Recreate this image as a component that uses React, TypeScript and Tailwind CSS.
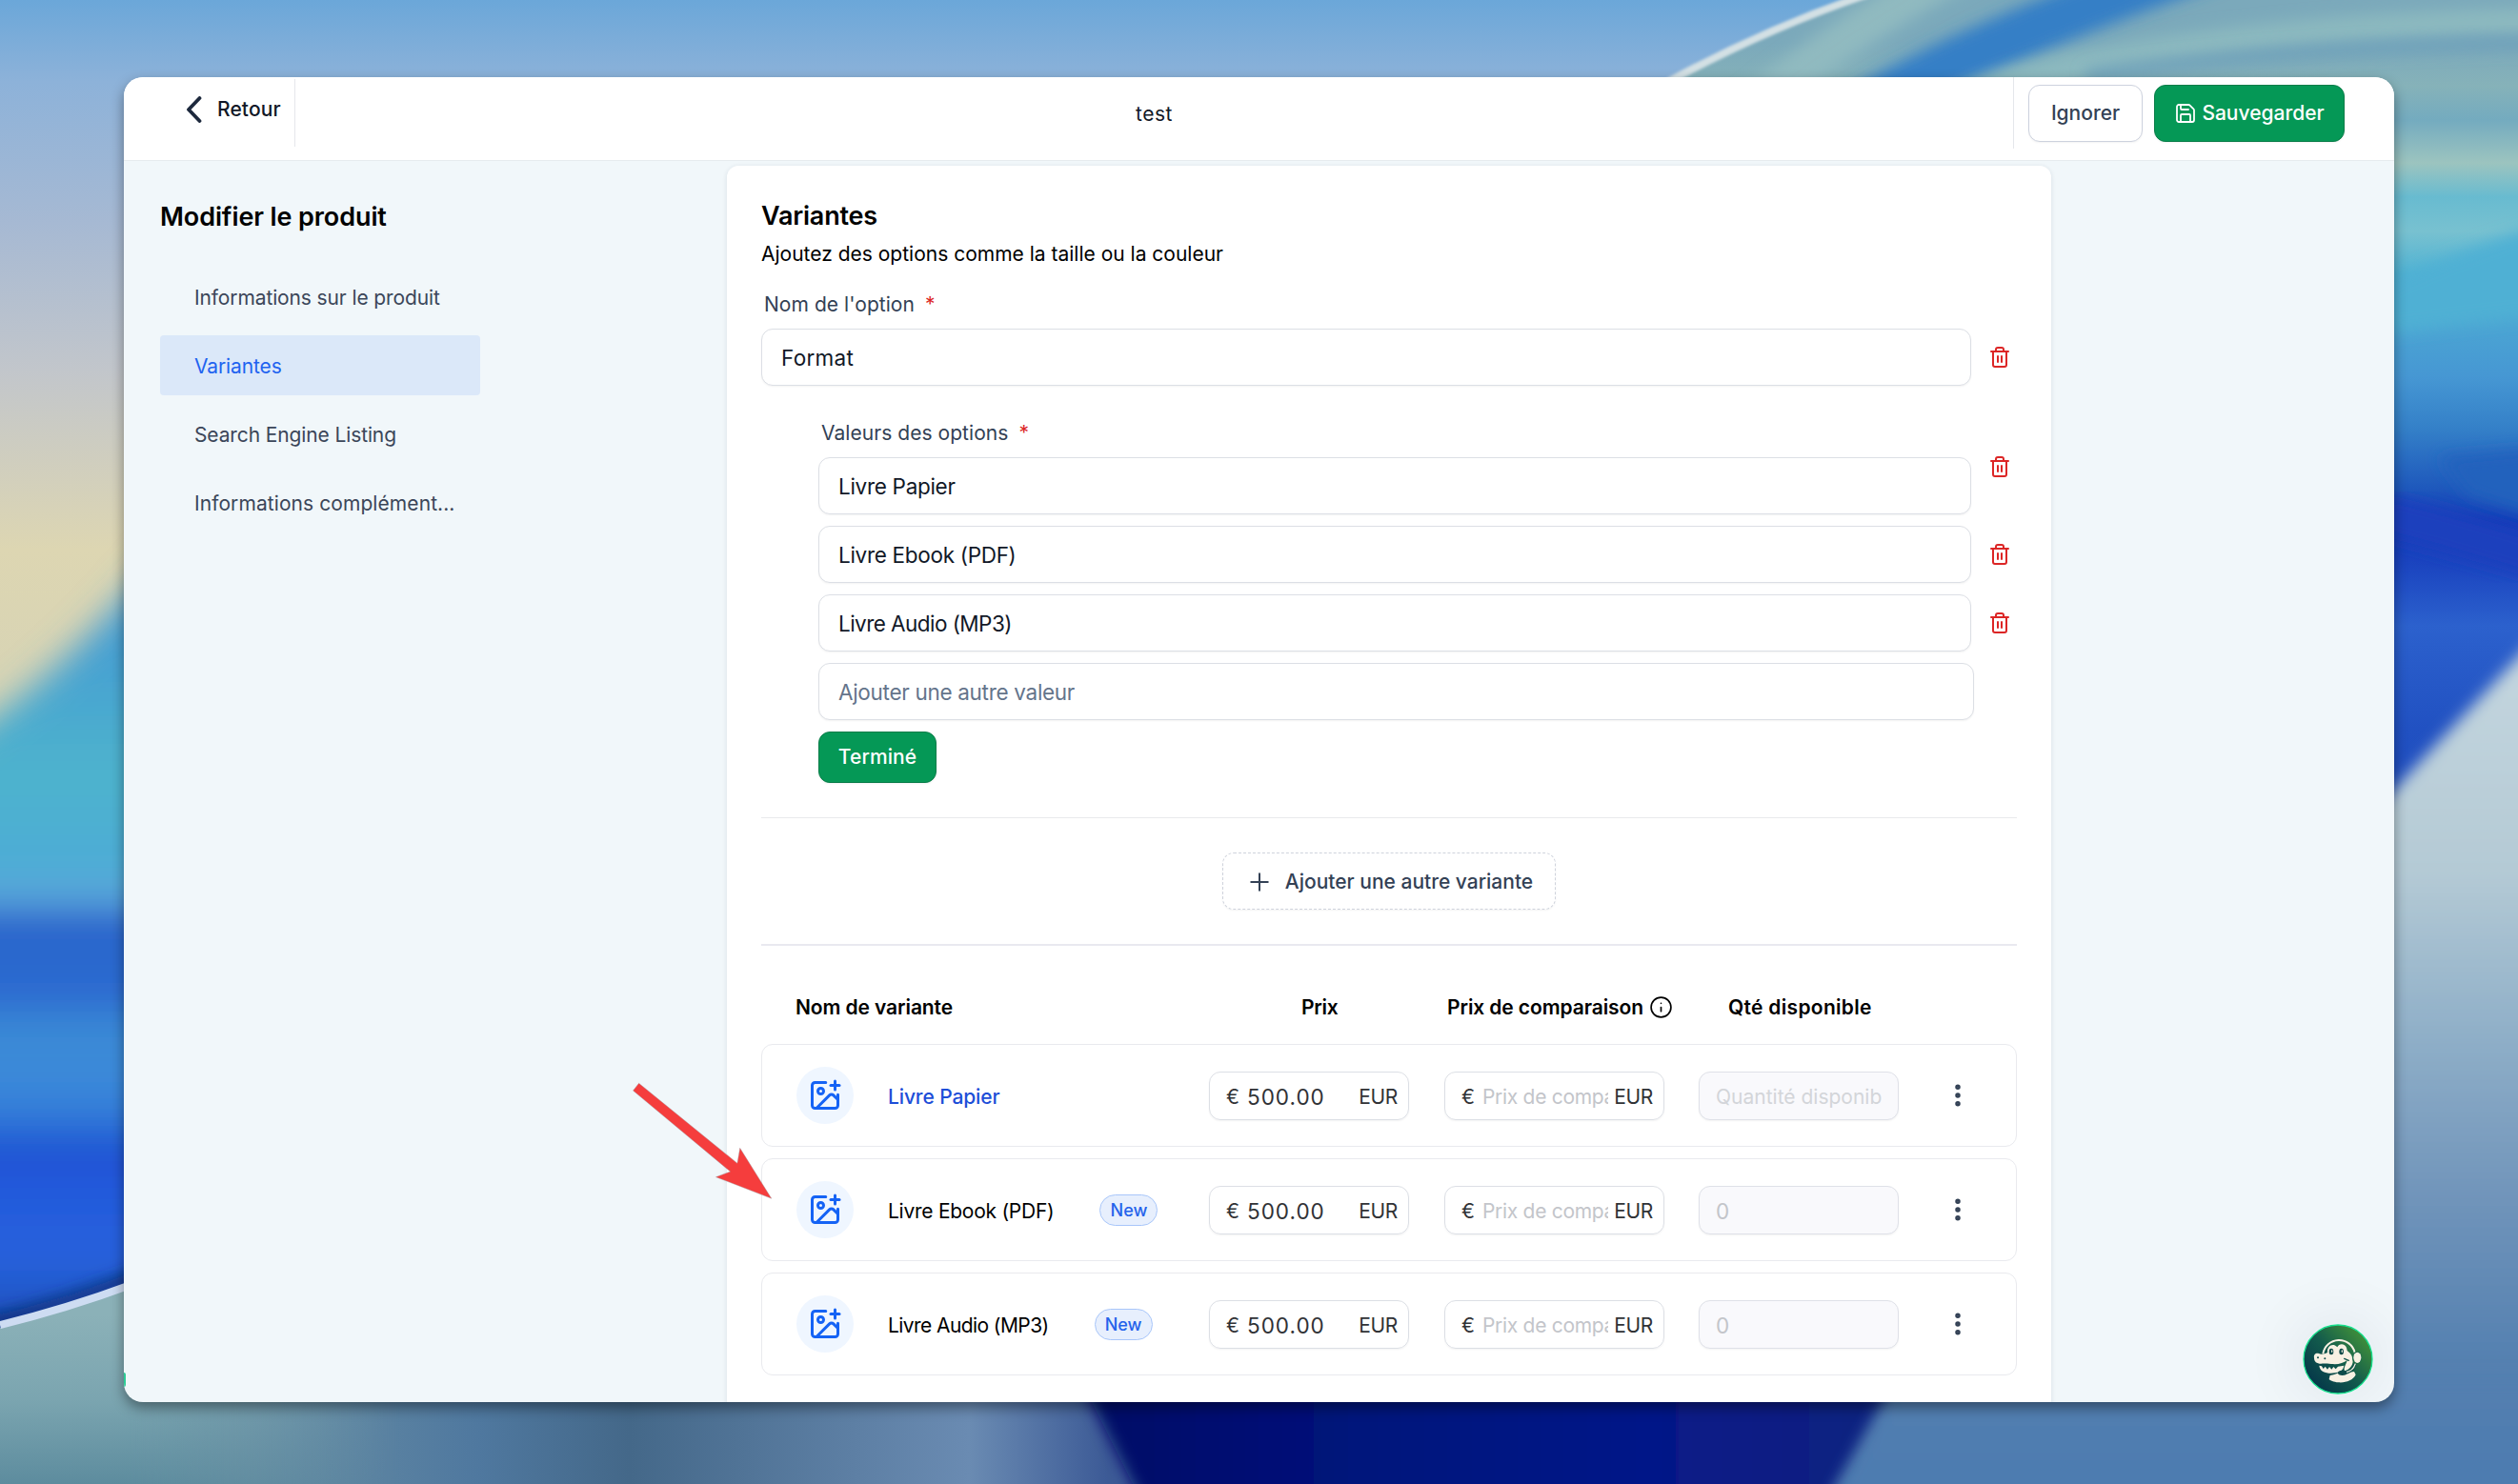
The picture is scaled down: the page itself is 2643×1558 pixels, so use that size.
import { ReactNode } from "react";
import clsx from "clsx";
import { EllipsisVertical, ImagePlus, Info, Plus, Save, Trash2 } from "lucide-react";

interface Variant {
  name: string;
  price: string;
  isNew: boolean;
  isLink: boolean;
  qtyPlaceholder: string;
}

const menu = [
  { label: "Informations sur le produit", active: false },
  { label: "Variantes", active: true },
  { label: "Search Engine Listing", active: false },
  { label: "Informations complément...", active: false },
];

const optionValues = ["Livre Papier", "Livre Ebook (PDF)", "Livre Audio (MP3)"];

const variants: Variant[] = [
  { name: "Livre Papier", price: "500.00", isNew: false, isLink: true, qtyPlaceholder: "Quantité disponible" },
  { name: "Livre Ebook (PDF)", price: "500.00", isNew: true, isLink: false, qtyPlaceholder: "0" },
  { name: "Livre Audio (MP3)", price: "500.00", isNew: true, isLink: false, qtyPlaceholder: "0" },
];

function Wallpaper() {
  return (
    <svg className="absolute inset-0 h-full w-full" viewBox="0 0 2643 1558" preserveAspectRatio="none">
      <defs>
        <linearGradient id="sky" x1="0" y1="0" x2="0" y2="1">
          <stop offset="0" stopColor="#6ba7d9" />
          <stop offset="0.055" stopColor="#8db2d9" />
          <stop offset="0.15" stopColor="#a6b9d3" />
          <stop offset="0.25" stopColor="#c2c6cb" />
          <stop offset="0.37" stopColor="#ddd6b2" />
          <stop offset="0.45" stopColor="#d8d4b4" />
          <stop offset="1" stopColor="#d8d4b4" />
        </linearGradient>
        <linearGradient id="leftWave" gradientUnits="userSpaceOnUse" x1="0" y1="560" x2="0" y2="1400">
          <stop offset="0" stopColor="#3c93d8" />
          <stop offset="0.14" stopColor="#459fd2" />
          <stop offset="0.3" stopColor="#4fb3cd" />
          <stop offset="0.42" stopColor="#4dacd6" />
          <stop offset="0.46" stopColor="#5fa6dc" />
          <stop offset="0.485" stopColor="#2059c9" />
          <stop offset="0.52" stopColor="#2e6bcd" />
          <stop offset="0.57" stopColor="#2a66d0" />
          <stop offset="0.62" stopColor="#3b8bd5" />
          <stop offset="0.69" stopColor="#3b89da" />
          <stop offset="0.74" stopColor="#2f75d8" />
          <stop offset="0.765" stopColor="#1d51d2" />
          <stop offset="0.82" stopColor="#245adc" />
          <stop offset="0.91" stopColor="#2662dc" />
          <stop offset="1" stopColor="#1c4cb4" />
        </linearGradient>
        <linearGradient id="floor" gradientUnits="userSpaceOnUse" x1="0" y1="0" x2="2643" y2="0">
          <stop offset="0" stopColor="#6a98a6" />
          <stop offset="0.1" stopColor="#688ea4" />
          <stop offset="0.19" stopColor="#4f789f" />
          <stop offset="0.25" stopColor="#446889" />
          <stop offset="0.385" stopColor="#6a8bb2" />
          <stop offset="0.44" stopColor="#3c5a96" />
          <stop offset="0.8" stopColor="#4c7bb0" />
          <stop offset="1" stopColor="#5c86b4" />
        </linearGradient>
        <linearGradient id="sage" gradientUnits="userSpaceOnUse" x1="0" y1="1380" x2="0" y2="1558">
          <stop offset="0" stopColor="#8bb1b8" />
          <stop offset="0.5" stopColor="#7ba5b0" />
          <stop offset="1" stopColor="#5d8c9e" />
        </linearGradient>
        <linearGradient id="sageFade" gradientUnits="userSpaceOnUse" x1="130" y1="0" x2="420" y2="0">
          <stop offset="0" stopColor="#fff" />
          <stop offset="1" stopColor="#000" />
        </linearGradient>
        <mask id="sageMask">
          <rect width="600" height="1558" fill="url(#sageFade)" />
        </mask>
        <linearGradient id="navy" gradientUnits="userSpaceOnUse" x1="1140" y1="0" x2="1980" y2="0">
          <stop offset="0" stopColor="#010f66" />
          <stop offset="0.35" stopColor="#04127c" />
          <stop offset="0.7" stopColor="#061888" />
          <stop offset="1" stopColor="#0a2380" />
        </linearGradient>
        <linearGradient id="rightWave" gradientUnits="userSpaceOnUse" x1="2513" y1="0" x2="2513" y2="900">
          <stop offset="0" stopColor="#7ba9bb" />
          <stop offset="0.05" stopColor="#7ba9bb" />
          <stop offset="0.1" stopColor="#86b2b9" />
          <stop offset="0.14" stopColor="#74abbf" />
          <stop offset="0.19" stopColor="#9cc4bf" />
          <stop offset="0.23" stopColor="#68bbd0" />
          <stop offset="0.27" stopColor="#78c1d0" />
          <stop offset="0.32" stopColor="#50b2d3" />
          <stop offset="0.44" stopColor="#4697d3" />
          <stop offset="0.5" stopColor="#3480c8" />
          <stop offset="0.57" stopColor="#1e58bc" />
          <stop offset="0.61" stopColor="#133ab8" />
          <stop offset="0.66" stopColor="#1b45c0" />
          <stop offset="0.73" stopColor="#2c61cd" />
          <stop offset="0.85" stopColor="#2151c2" />
          <stop offset="1" stopColor="#1c48bc" />
        </linearGradient>
        <linearGradient id="mist" gradientUnits="userSpaceOnUse" x1="0" y1="700" x2="0" y2="1558">
          <stop offset="0" stopColor="#c3d5de" />
          <stop offset="0.25" stopColor="#b4cad5" />
          <stop offset="0.45" stopColor="#8fafc8" />
          <stop offset="0.65" stopColor="#7094ba" />
          <stop offset="0.85" stopColor="#5480b0" />
          <stop offset="1" stopColor="#4d7bb0" />
        </linearGradient>
        <filter id="soft20" x="-30%" y="-30%" width="160%" height="160%">
          <feGaussianBlur stdDeviation="18" />
        </filter>
        <filter id="soft8" x="-20%" y="-50%" width="140%" height="200%">
          <feGaussianBlur stdDeviation="8" />
        </filter>
        <filter id="soft2" x="-20%" y="-20%" width="140%" height="140%">
          <feGaussianBlur stdDeviation="1.5" />
        </filter>
      </defs>
      <rect width="2643" height="1558" fill="url(#sky)" />

      {/* left side */}
      <path d="M-80 800 Q50 730 180 570 L400 500 L400 1440 L-80 1440Z" fill="url(#leftWave)" filter="url(#soft20)" />
      <path d="M-20 1384 Q80 1360 160 1326 L160 1342 Q80 1370 -20 1400Z" fill="#0a2d74" filter="url(#soft8)" />
      <rect y="1462" width="2643" height="96" fill="url(#floor)" />
      <path d="M0 1394 Q70 1378 300 1290 L600 1290 L600 1558 L0 1558Z" fill="url(#sage)" mask="url(#sageMask)" />
      <path d="M0 1391 Q70 1374 140 1348" fill="none" stroke="#cddcf2" strokeWidth="8" />

      {/* bottom */}
      <path d="M1130 1440 L2010 1440 L1915 1590 L1205 1590Z" fill="url(#navy)" filter="url(#soft8)" />

      {/* right side */}
      <path d="M1754 84 Q1854 30 1956 -4 L2660 -4 L2660 900 L2300 900 L2300 84Z" fill="url(#rightWave)" />
      <path d="M2500 300 Q2580 262 2670 236 L2670 330 L2500 350Z" fill="#4fb0d4" filter="url(#soft8)" />
      <path d="M2500 540 Q2580 560 2670 588" fill="none" stroke="#1a40bd" strokeWidth="44" filter="url(#soft8)" />
      <path d="M2560 480 L2670 470 L2670 545 L2590 520Z" fill="#2462bd" filter="url(#soft8)" />
      <path d="M1820 130 Q1930 30 2130 -70" fill="none" stroke="#90bac0" strokeWidth="40" filter="url(#soft8)" />
      <path d="M1930 130 Q2060 50 2330 -44" fill="none" stroke="#367fc6" strokeWidth="52" filter="url(#soft8)" />
      <path d="M2040 112 Q2240 30 2680 22" fill="none" stroke="#8cb9bf" strokeWidth="28" filter="url(#soft8)" />
      <path d="M2190 80 Q2400 48 2680 44" fill="none" stroke="#6c9fba" strokeWidth="12" filter="url(#soft8)" />
      <path d="M1751 86 Q1854 30 1960 -6" fill="none" stroke="#d3e0e4" strokeWidth="8" filter="url(#soft2)" />
      <path d="M2480 864 L2660 672 L2700 1600 L2480 1600Z" fill="url(#mist)" filter="url(#soft8)" />
      <path d="M1990 1446 L2700 1446 L2700 1640 L1885 1640Z" fill="url(#mist)" filter="url(#soft8)" />
    </svg>
  );
}

function Mascot() {
  return (
    <svg className="h-[74px] w-[74px]" viewBox="110 88 222 222">
      <defs>
        <linearGradient id="mascotBg" x1="0.15" y1="0.85" x2="0.85" y2="0.2">
          <stop offset="0" stopColor="#06394a" />
          <stop offset="0.5" stopColor="#125a4c" />
          <stop offset="1" stopColor="#3b8a3c" />
        </linearGradient>
      </defs>
      <circle cx="221" cy="199" r="108" fill="url(#mascotBg)" stroke="#16e08d" strokeWidth="4" />
      <path d="M174 182 A51 51 0 0 1 274 178" fill="none" stroke="#f8f1e3" strokeWidth="6" />
      {/* head and upper snout */}
      <path
        d="M146 195 C144 183 152 178 161 181 C170 185 178 182 188 178 C186 162 197 152 208 154 C214 155 217 160 219 161 C223 152 233 149 241 154 C248 159 249 165 250 172 C262 180 268 192 268 204 C268 220 256 232 242 236 C238 224 248 214 250 202 C238 212 222 216 200 214 C186 213 178 212 168 213 C154 213 146 206 146 195Z"
        fill="#f8f1e3"
      />
      {/* lower jaw with teeth */}
      <path
        d="M162 219 L170 221 L175 229 L181 222 L188 231 L194 223 L201 231 L207 223 L214 230 L221 222 L240 219 C238 232 228 240 212 242 C190 245 164 242 162 219Z"
        fill="#f8f1e3"
      />
      {/* neck */}
      <path d="M196 250 C212 248 222 242 230 238 L256 240 L272 238 L277 248 C268 266 246 274 222 272 C208 271 196 266 193 262Z" fill="#f8f1e3" />
      <path d="M241 197 L255 203" fill="none" stroke="#11564c" strokeWidth="4" strokeLinecap="round" />
      <ellipse cx="200" cy="175" rx="7" ry="10" fill="#0f4c4a" />
      <ellipse cx="232" cy="175" rx="7" ry="10" fill="#0f4c4a" />
      <ellipse cx="202" cy="174" rx="2" ry="4" fill="#f8f1e3" />
      <ellipse cx="234" cy="174" rx="2" ry="4" fill="#f8f1e3" />
      <circle cx="158" cy="194" r="3" fill="#0f4c4a" />
      <circle cx="180" cy="197" r="3" fill="#0f4c4a" />
      <ellipse cx="281" cy="194" rx="15" ry="20" fill="#1c6a48" />
      <ellipse cx="282" cy="194" rx="12" ry="17" fill="#f8f1e3" />
      <path d="M274 214 C270 230 256 240 242 242" fill="none" stroke="#11564c" strokeWidth="11" />
      <path d="M276 213 C271 229 257 239 244 241" fill="none" stroke="#f8f1e3" strokeWidth="4" />
      <ellipse cx="235" cy="242" rx="14" ry="8" fill="#0f4c4a" />
    </svg>
  );
}

function Label({ children }: { children: ReactNode }) {
  return (
    <label className="mb-[11px] flex h-[30px] items-center gap-[11px] pt-0.5 pl-[3px] text-[21px] tracking-[0.05px] text-[#334155]">
      {children}
      <span className="text-[#dc2626]">*</span>
    </label>
  );
}

function TextInput({ value, placeholder }: { value?: string; placeholder?: string }) {
  return (
    <input
      type="text"
      defaultValue={value}
      placeholder={placeholder}
      className={clsx(
        "block h-[60px] w-full rounded-xl border border-[#dcdfe5] bg-white px-5 text-[22.5px] text-[#111827] shadow-xs placeholder:text-[#64748b]",
        value === "Format" && "tracking-[0.3px]",
        value === "Livre Audio (MP3)" && "tracking-[-0.55px]",
        value !== "Format" && value !== "Livre Audio (MP3)" && "tracking-[-0.3px]"
      )}
    />
  );
}

function DeleteButton() {
  return (
    <button className="mr-[6px] ml-[18px] shrink-0 text-[#dc2626]">
      <Trash2 size={24} strokeWidth={2} />
    </button>
  );
}

function VariantRow({ variant }: { variant: Variant }) {
  return (
    <div className="grid h-[108px] grid-cols-[96px_337px_247px_267px_210px_1fr] items-center rounded-xl border border-[#e9eaee] pl-[36px]">
      <div className="flex h-[60px] w-[60px] items-center justify-center rounded-full bg-[#eff6ff] text-[#1563f5]">
        <ImagePlus size={36} strokeWidth={2} />
      </div>
      <div className="flex items-center gap-[48px]">
        <span
          className={clsx(
            "pt-[3px] text-[21px]",
            variant.isLink && "font-medium tracking-[-0.12px] text-[#1d4ed8]",
            !variant.isLink && (variant.name.includes("PDF") ? "tracking-[-0.26px] text-black" : "tracking-[-0.58px] text-black")
          )}
        >
          {variant.name}
        </span>
        {variant.isNew && (
          <span className="flex h-[33px] w-[61px] items-center justify-center rounded-full border border-[#a8c6fa] bg-[#e7effd] text-[18px] font-medium text-[#2563eb]">
            New
          </span>
        )}
      </div>
      <div className="flex h-[51px] w-[210px] items-center rounded-xl border border-[#dcdfe5] pt-[3px] pr-[11px] pl-[17px] text-[21px] text-[#303236] shadow-xs">
        <span className="w-[22px]">€</span>
        <input className="w-0 flex-1 text-[22.5px] tracking-[1px]" defaultValue={variant.price} />
        <span className="tracking-[-0.3px]">EUR</span>
      </div>
      <div className="flex h-[51px] w-[231px] items-center rounded-xl border border-[#dcdfe5] pt-[3px] pr-[11px] pl-[17px] text-[21px] text-[#303236] shadow-xs">
        <span className="w-[22px]">€</span>
        <input className="mr-[6px] w-0 flex-1 tracking-[-0.3px] placeholder:text-[#c3c5ca]" placeholder="Prix de comparaison" />
        <span className="tracking-[-0.3px]">EUR</span>
      </div>
      <div className="flex h-[51px] w-[210px] items-center rounded-xl border border-[#dfe1e8] bg-[#f9f9fc] px-[17px] pt-[3px] text-[21px] shadow-xs">
        <input
          disabled
          className={clsx(
            "w-0 flex-1",
            variant.isNew ? "text-[22.5px] placeholder:text-[#c3c5ca]" : "placeholder:text-[#d3d5d9]"
          )}
          placeholder={variant.qtyPlaceholder}
        />
      </div>
      <EllipsisVertical size={30} strokeWidth={2.4} className="ml-[47px] text-[#334155]" />
    </div>
  );
}

export default function App() {
  return (
    <div className="relative h-[1558px] w-[2643px] overflow-hidden pt-[81px] pl-[130px] font-['Inter',sans-serif]">
      <Wallpaper />

      <div className="relative flex h-[1391px] w-[2383px] flex-col overflow-hidden rounded-[20px] bg-[#f1f7fa] shadow-[0_6px_14px_rgba(0,0,0,0.4)]">
        {/* header */}
        <header className="flex h-[88px] shrink-0 items-start border-b border-[#e6ebee] bg-white">
          <div className="mt-0.5 flex h-[71px] w-[180px] items-center gap-[16px] border-r border-gray-200 pb-2 pl-[65px]">
            <svg width="17" height="28" viewBox="0 0 17 28" fill="none" className="text-slate-800">
              <path d="M14.5 2 L3 14 L14.5 26" stroke="currentColor" strokeWidth="3.8" strokeLinecap="round" strokeLinejoin="round" />
            </svg>
            <span className="text-[21px] font-medium tracking-[0.1px] text-[#111827]">Retour</span>
          </div>
          <div className="flex h-[77px] flex-1 items-center justify-center text-[21px] tracking-[0.5px] text-[#111827]">test</div>
          <div className="flex h-[75px] w-[400px] gap-3 border-l border-gray-200 pt-2 pl-[15px]">
            <button className="flex h-[60px] w-[120px] items-center justify-center rounded-xl border border-[#cdd2de] bg-white text-[21px] font-medium text-[#334155] shadow-xs">
              Ignorer
            </button>
            <button className="flex h-[60px] w-[200px] items-center justify-center gap-[5px] rounded-xl border border-[#0a7d49] bg-[#059856] text-[21px] font-medium text-white shadow-xs">
              <Save size={24} strokeWidth={1.8} />
              Sauvegarder
            </button>
          </div>
        </header>

        <div className="flex min-h-0 flex-1">
          {/* sidebar */}
          <aside className="w-[633px] shrink-0 pt-[41px] pl-[38px]">
            <h1 className="mb-[34px] h-9 text-[27px] leading-9 font-semibold tracking-[-0.1px] text-black">Modifier le produit</h1>
            <nav className="flex w-[336px] flex-col gap-[9px]">
              {menu.map((item) => (
                <a
                  key={item.label}
                  className={clsx(
                    "flex h-[63px] items-center rounded pt-0.5 pl-[36px] text-[21px] whitespace-nowrap",
                    item.active && "bg-[#dbe8f9] text-[#1f63f0]",
                    !item.active && "text-[#3b4659]",
                    item.label.endsWith("...") ? "tracking-[0.08px]" : "tracking-[-0.12px]"
                  )}
                >
                  {item.label}
                </a>
              ))}
            </nav>
          </aside>

          {/* variants card */}
          <main className="mt-[5px] h-[1400px] w-[1390px] rounded-t-xl bg-white px-9 pt-[35px] shadow-[0_1px_4px_1px_rgba(15,35,60,0.08)]">
            <h2 className="h-9 text-[27px] leading-9 font-semibold tracking-[-0.2px] text-black">Variantes</h2>
            <p className="mt-[7px] h-[30px] text-[21px] leading-[30px] text-black">
              Ajoutez des options comme la taille ou la couleur
            </p>

            <div className="mt-[22px]">
              <Label>Nom de l'option</Label>
              <div className="flex items-center">
                <TextInput value="Format" />
                <DeleteButton />
              </div>
            </div>

            <div className="mt-[34px] flex flex-col gap-3 pl-[60px]">
              {optionValues.map((value, index) => (
                <div key={value} className="flex items-center">
                  <div className="flex-1">
                    {index === 0 && <Label>Valeurs des options</Label>}
                    <TextInput value={value} />
                  </div>
                  <DeleteButton />
                </div>
              ))}
              <div className="pr-[45px]">
                <TextInput placeholder="Ajouter une autre valeur" />
              </div>
              <button className="h-[54px] w-[124px] rounded-xl border border-[#0a7d49] bg-[#059856] text-[21px] font-medium tracking-[0.1px] text-white shadow-xs">
                Terminé
              </button>
            </div>

            <div className="mt-9 flex justify-center border-t border-[#e9eaec] py-9">
              <button className="flex h-[60px] w-[350px] items-center justify-center gap-[12px] rounded-xl border border-dashed border-[#cfd3dc] pt-px text-[21px] font-medium text-[#334155] shadow-xs">
                <Plus size={30} strokeWidth={1.6} />
                Ajouter une autre variante
              </button>
            </div>

            <div className="border-t-2 border-[#e9e9f0] pt-[49px]">
              <div className="mb-6 grid h-[30px] grid-cols-[433px_248px_267px_1fr] items-center pl-9 text-[21px] font-semibold text-black">
                <span className="tracking-[-0.1px]">Nom de variante</span>
                <span className="pl-[98px] tracking-[-0.3px]">Prix</span>
                <span className="flex items-center gap-[6px] pl-[3px] tracking-[-0.1px]">
                  Prix de comparaison
                  <Info size={25} strokeWidth={1.6} />
                </span>
                <span className="pl-[31px] tracking-[0.3px]">Qté disponible</span>
              </div>
              <div className="flex flex-col gap-3">
                {variants.map((variant) => (
                  <VariantRow key={variant.name} variant={variant} />
                ))}
              </div>
            </div>
          </main>
        </div>

        {/* support chat */}
        <div className="absolute right-[22px] bottom-[8px] rounded-full shadow-[0_0_60px_12px_rgba(15,35,60,0.06)]">
          <Mascot />
        </div>
        <div className="absolute bottom-4 left-0 h-[15px] w-[2px] rounded-r bg-[#2ccb94]" />
      </div>

      {/* arrow pointing at the second variant */}
      <svg className="absolute top-[1120px] left-[650px]" width="180" height="150" viewBox="650 1120 180 150">
        <path
          d="M670.6 1137.3 L773.9 1221.3 L776.7 1205.3 L809.8 1258.3 L751.4 1235.7 L766.5 1230 L664.5 1145Z"
          fill="#f53d3d"
          stroke="#9aa0a6"
          strokeOpacity="0.5"
          strokeWidth="0.8"
        />
      </svg>
    </div>
  );
}
